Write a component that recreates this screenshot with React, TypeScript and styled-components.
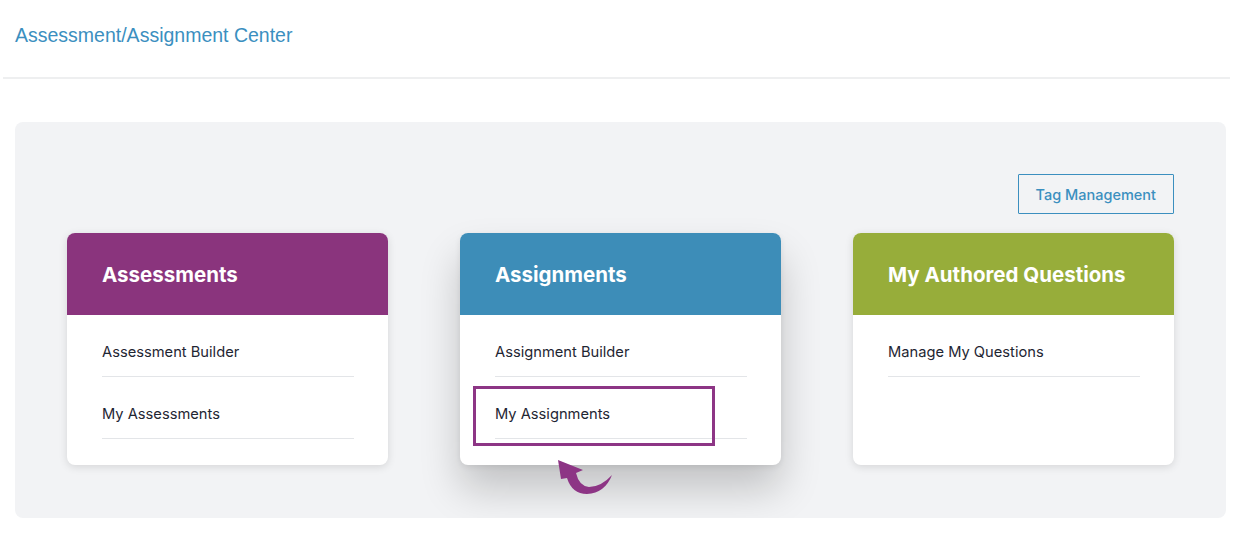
import styled, { createGlobalStyle } from "styled-components";

interface CardData {
  title: string;
  color: string;
  items: string[];
  raised?: boolean;
  highlight?: boolean;
}

const cards: CardData[] = [
  { title: "Assessments", color: "#8a347d", items: ["Assessment Builder", "My Assessments"] },
  { title: "Assignments", color: "#3d8db8", items: ["Assignment Builder", "My Assignments"], raised: true, highlight: true },
  { title: "My Authored Questions", color: "#97ad3a", items: ["Manage My Questions"] },
];

export default function App() {
  return (
    <>
      <GlobalStyle />
      <Header>
        <Title>Assessment/Assignment Center</Title>
      </Header>
      <Panel>
        <Toolbar>
          <TagButton>Tag Management</TagButton>
        </Toolbar>
        <CardGrid>
          {cards.map((card) => (
            <Card key={card.title} $raised={card.raised}>
              <CardHead $color={card.color}>{card.title}</CardHead>
              <CardBody>
                {card.items.map((item) => (
                  <Item key={item}>{item}</Item>
                ))}
              </CardBody>
              {card.highlight && (
                <>
                  <HighlightBox />
                  <Arrow width="62" height="42" viewBox="0 0 62 42">
                    <path
                      d="M5 5 L30 15 L23 18 Q26 31 36 32 Q48 32 59 20 Q52 38 34 39 Q19 39 14 23 L8 24 Z"
                      fill="#8d3585"
                    />
                  </Arrow>
                </>
              )}
            </Card>
          ))}
        </CardGrid>
      </Panel>
    </>
  );
}

const GlobalStyle = createGlobalStyle`
  body {
    margin: 0;
    background: #ffffff;
    font-family: Inter, "Liberation Sans", sans-serif;
  }
`;

const Header = styled.header`
  margin: 0 10px 0 3px;
  padding: 23px 12px 0;
  height: 54px;
  border-bottom: 2px solid #eeeff0;
`;

const Title = styled.h1`
  margin: 0;
  font-family: "Liberation Sans", Arial, sans-serif;
  font-size: 19.5px;
  font-weight: 400;
  color: #3b8fbf;
  line-height: 24px;
`;

const Panel = styled.section`
  margin: 43px 14px 0 15px;
  background: #f2f3f5;
  border-radius: 8px;
  padding: 52px 52px 53px;
`;

const Toolbar = styled.div`
  display: flex;
  justify-content: flex-end;
  margin-bottom: 19px;
`;

const TagButton = styled.button`
  height: 40px;
  padding: 0 17px;
  background: transparent;
  border: 1.5px solid #3b8fbf;
  border-radius: 1px;
  color: #3b8fbf;
  font-family: Inter, "Liberation Sans", sans-serif;
  font-size: 14.5px;
  font-weight: 500;
  cursor: pointer;
`;

const CardGrid = styled.div`
  display: grid;
  grid-template-columns: repeat(3, 321px);
  column-gap: 72px;
`;

const Card = styled.div<{ $raised?: boolean }>`
  position: relative;
  height: 232px;
  background: #ffffff;
  border-radius: 8px;
  box-shadow: ${(p) =>
    p.$raised
      ? "0 24px 40px rgba(0,0,0,0.2), 0 2px 6px rgba(0,0,0,0.08)"
      : "0 2px 8px rgba(0,0,0,0.12)"};
`;

const CardHead = styled.div<{ $color: string }>`
  height: 82px;
  display: flex;
  align-items: center;
  padding: 0 35px;
  background: ${(p) => p.$color};
  border-radius: 8px 8px 0 0;
  color: #ffffff;
  font-size: 20.5px;
  font-weight: 700;
`;

const CardBody = styled.div`
  padding: 0 34px 0 35px;
`;

const Item = styled.div`
  padding: 28px 0 15px;
  line-height: 18px;
  font-size: 14.7px;
  color: #1f2633;
  border-bottom: 1px solid #e3e5e8;
  cursor: pointer;
`;

const HighlightBox = styled.div`
  position: absolute;
  left: 13px;
  top: 153px;
  width: 242px;
  height: 60px;
  box-sizing: border-box;
  border: 3px solid #8d3585;
`;

const Arrow = styled.svg`
  position: absolute;
  left: 93px;
  top: 222px;
`;
